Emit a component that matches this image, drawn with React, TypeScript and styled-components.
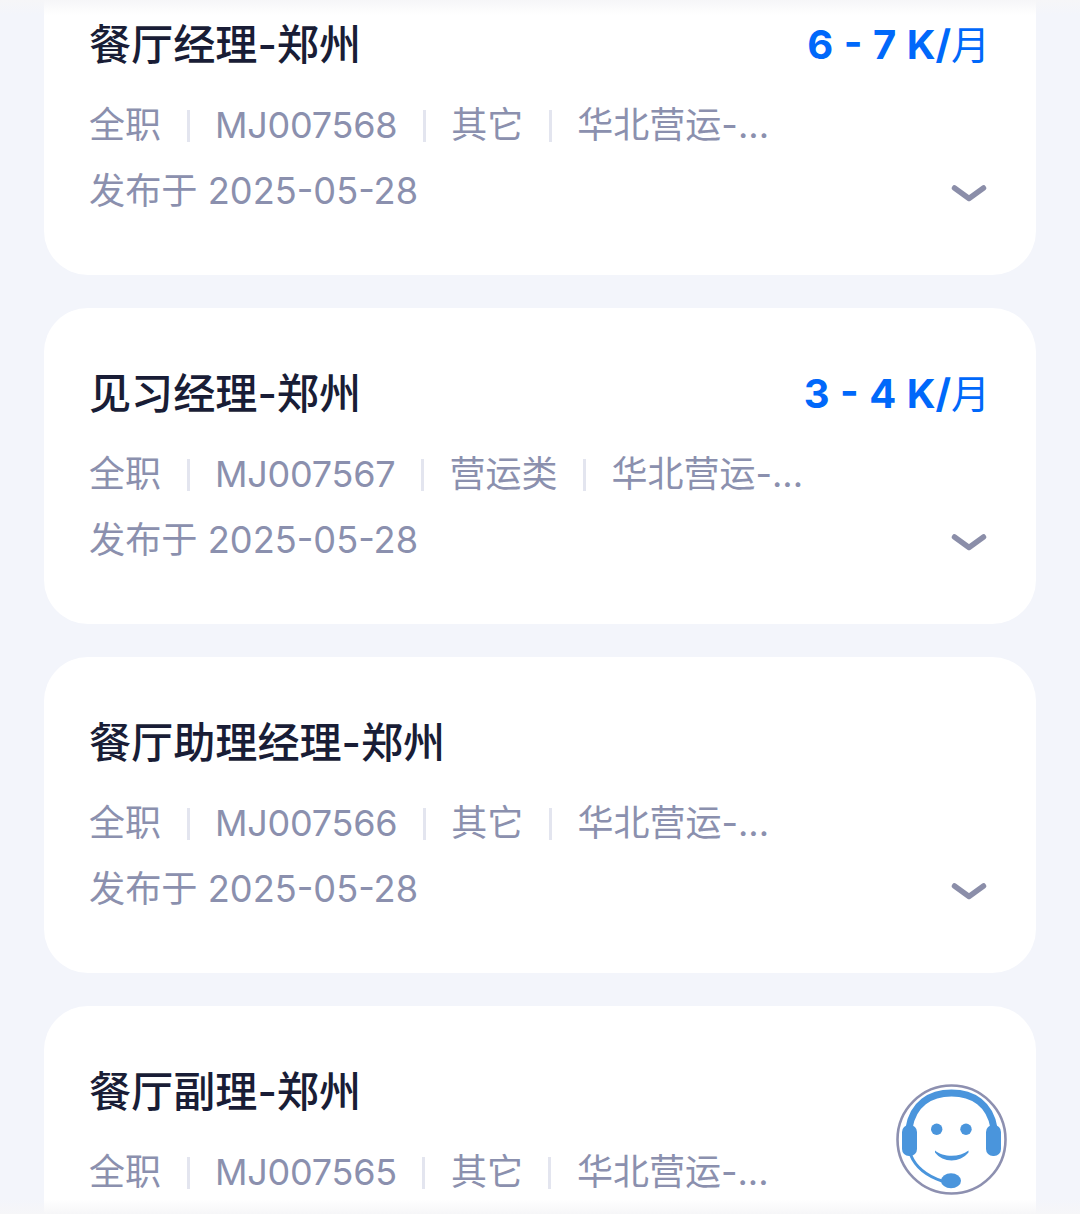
import React from "react";
import styled, { createGlobalStyle } from "styled-components";

type JobProps = {
  title: string;
  salary?: string;
  code: string;
  category: string;
  region: string;
  date: string;
};

const JOBS: JobProps[] = [
  { title: "餐厅经理-郑州", salary: "6 - 7 K/", code: "MJ007568", category: "其它", region: "华北营运-...", date: "2025-05-28" },
  { title: "见习经理-郑州", salary: "3 - 4 K/", code: "MJ007567", category: "营运类", region: "华北营运-...", date: "2025-05-28" },
  { title: "餐厅助理经理-郑州", code: "MJ007566", category: "其它", region: "华北营运-...", date: "2025-05-28" },
  { title: "餐厅副理-郑州", code: "MJ007565", category: "其它", region: "华北营运-...", date: "2025-05-28" },
];

const FONT = `Inter, "Noto Sans CJK SC", sans-serif`;

const GlobalStyle = createGlobalStyle`
  html, body {
    margin: 0;
    padding: 0;
    background: #f3f5fb;
  }
`;

const Page = styled.div`
  position: relative;
  width: 1080px;
  height: 1214px;
  overflow: hidden;
  background: #f3f5fb;
  font-family: ${FONT};
`;

const List = styled.div`
  display: flex;
  flex-direction: column;
  gap: 33px;
  margin-top: -41px;
  padding: 0 44px;
`;

const Card = styled.div`
  flex: none;
  height: 316px;
  box-sizing: border-box;
  padding: 61px 49px 0 45px;
  background: #ffffff;
  border-radius: 44px;
`;

const TitleRow = styled.div`
  display: flex;
  justify-content: space-between;
  align-items: center;
  height: 50px;
`;

const Title = styled.div`
  font-size: 42.1px;
  font-weight: 500;
  color: #191d36;
  line-height: 50px;
`;

const Salary = styled.div`
  margin-right: -3px;
  font-size: 40px;
  font-weight: 700;
  color: #0068fa;
  line-height: 50px;
  word-spacing: 1px;
`;

const SalaryUnit = styled.span`
  font-weight: 400;
  font-size: 39px;
`;

const MetaRow = styled.div`
  display: flex;
  align-items: center;
  height: 44px;
  margin-top: 33px;
  font-size: 36px;
  line-height: 44px;
  color: #8b90ae;
`;

const Code = styled.span`
  letter-spacing: -0.25px;
`;

const Divider = styled.span`
  flex: none;
  width: 3px;
  height: 32px;
  margin: 2px 25.5px 0;
  background: #e3e5ef;
`;

const DateRow = styled.div`
  display: flex;
  justify-content: space-between;
  align-items: center;
  height: 44px;
  margin-top: 22px;
  font-size: 36.2px;
  line-height: 44px;
  color: #8b90ae;
`;

const ChevronWrap = styled.span`
  display: flex;
  margin-top: 5px;
`;

const TopFade = styled.div`
  position: absolute;
  top: 0;
  left: 0;
  right: 0;
  height: 15px;
  background: linear-gradient(#f6f6f8, rgba(255, 255, 255, 0));
`;

const BottomFade = styled.div`
  position: absolute;
  bottom: 0;
  left: 0;
  right: 0;
  height: 15px;
  background: linear-gradient(rgba(255, 255, 255, 0), #f6f6f8);
`;

const ServiceButton = styled.div`
  position: absolute;
  left: 896px;
  top: 1084px;
  width: 111px;
  height: 111px;
`;

const Chevron = () => (
  <ChevronWrap>
    <svg width="36" height="20" viewBox="0 0 36 20" fill="none">
      <path
        d="M3.5 4L18 14.5L32.5 4"
        stroke="#8b8ea9"
        strokeWidth="5.5"
        strokeLinecap="round"
        strokeLinejoin="round"
      />
    </svg>
  </ChevronWrap>
);

const ServiceIcon = () => (
  <svg width="111" height="111" viewBox="0 0 111 111" fill="none">
    <circle cx="55.5" cy="55.5" r="54" fill="#ffffff" stroke="#8d90b0" strokeWidth="2.6" />
    <path
      d="M13 44C17 20 34 9 55.5 9C77 9 94 20 98 44"
      stroke="#4a95dc"
      strokeWidth="7"
      fill="none"
    />
    <rect x="6" y="41" width="15" height="31" rx="7" fill="#4a95dc" />
    <rect x="90" y="41" width="15" height="31" rx="7" fill="#4a95dc" />
    <circle cx="40.7" cy="45.3" r="5.7" fill="#4a95dc" />
    <circle cx="70" cy="45.3" r="5.7" fill="#4a95dc" />
    <path
      d="M39 66.5C47 73.5 64 73.5 72.5 66.5L72.5 68.5C64 79 47 79 39 68.5Z"
      fill="#4a95dc"
    />
    <path d="M14.7 71C20 84 31 92 46 97" stroke="#4a95dc" strokeWidth="3" strokeLinecap="round" />
    <ellipse cx="55" cy="96.7" rx="10" ry="7.5" fill="#4a95dc" />
  </svg>
);

function JobCard({ job }: { job: JobProps }) {
  return (
    <Card>
      <TitleRow>
        <Title>{job.title}</Title>
        {job.salary && (
          <Salary>
            {job.salary}
            <SalaryUnit>月</SalaryUnit>
          </Salary>
        )}
      </TitleRow>
      <MetaRow>
        <span>全职</span>
        <Divider />
        <Code>{job.code}</Code>
        <Divider />
        <span>{job.category}</span>
        <Divider />
        <span>{job.region}</span>
      </MetaRow>
      <DateRow>
        <span>发布于 {job.date}</span>
        <Chevron />
      </DateRow>
    </Card>
  );
}

export default function App() {
  return (
    <Page>
      <GlobalStyle />
      <List>
        {JOBS.map((job) => (
          <JobCard key={job.code} job={job} />
        ))}
      </List>
      <TopFade />
      <BottomFade />
      <ServiceButton>
        <ServiceIcon />
      </ServiceButton>
    </Page>
  );
}
